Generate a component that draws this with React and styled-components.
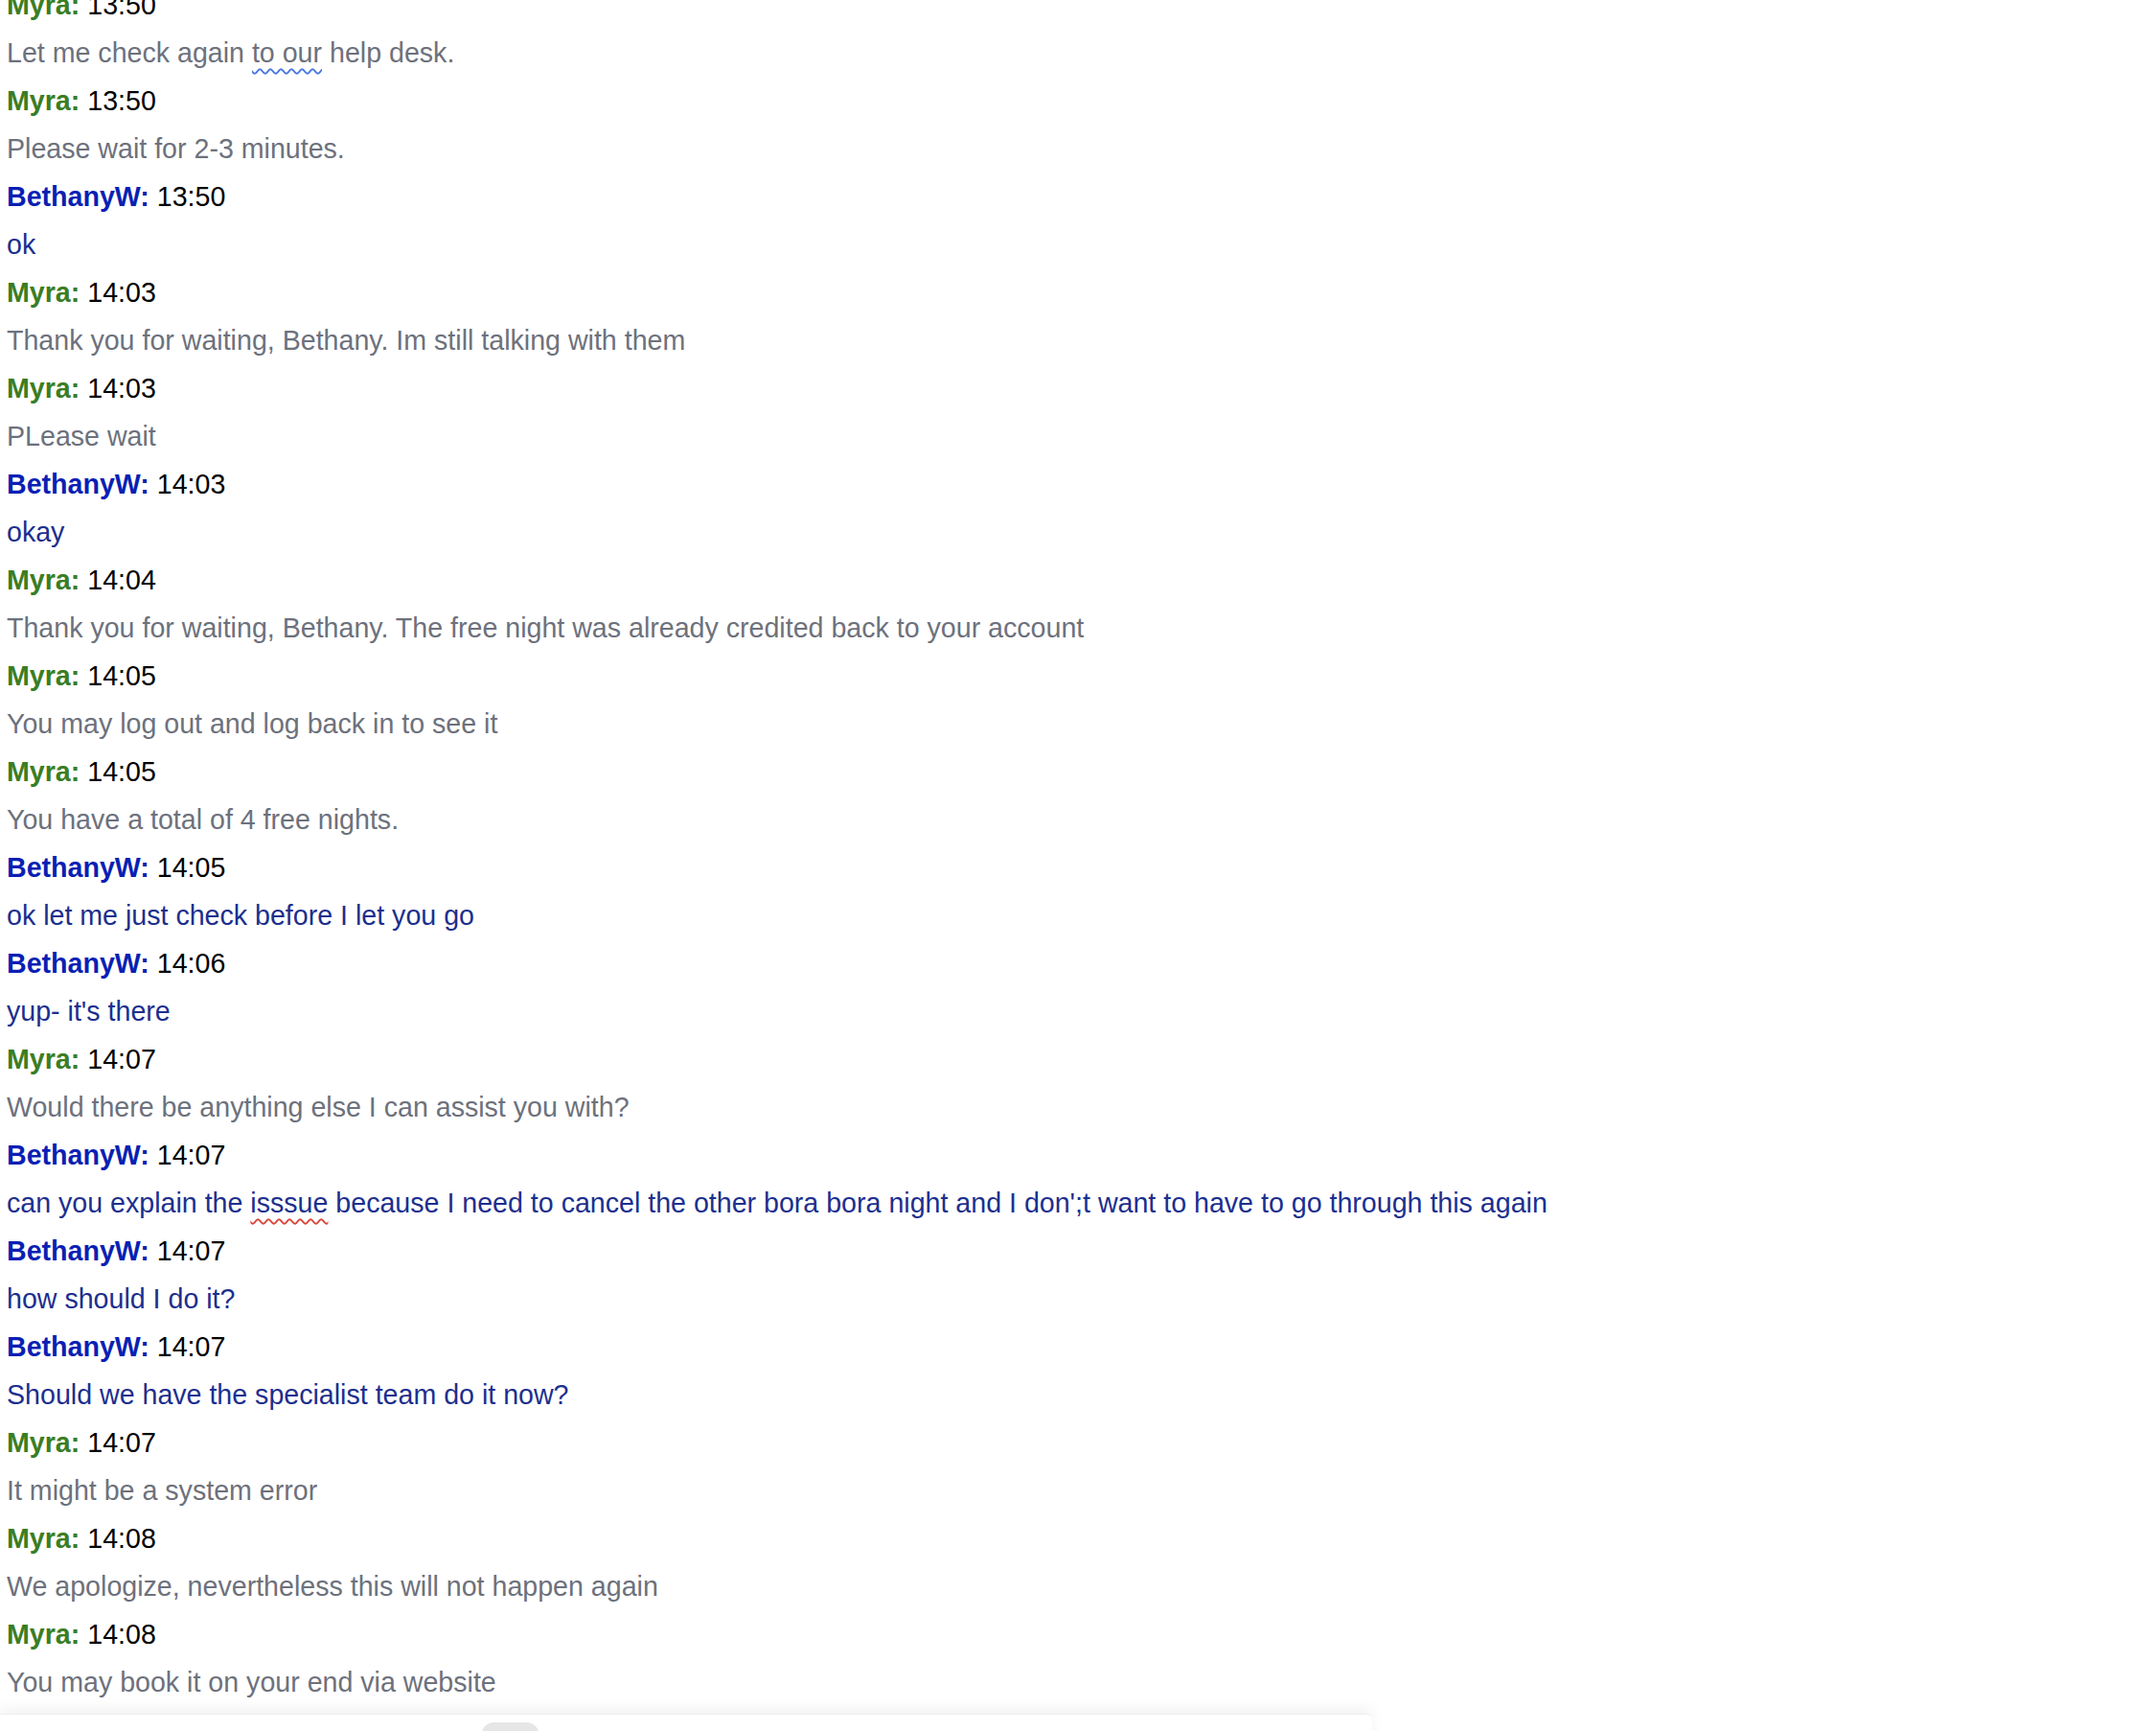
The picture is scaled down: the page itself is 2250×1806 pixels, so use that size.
import React from "react";
import styled, { createGlobalStyle } from "styled-components";

const Global = createGlobalStyle`
  html, body {
    margin: 0;
    padding: 0;
    background: #ffffff;
    overflow: hidden;
    height: 100%;
  }
  body {
    font-family: "Liberation Sans", Arial, Helvetica, sans-serif;
  }
`;

const Page = styled.div`
  width: 2250px;
  height: 1806px;
  overflow: hidden;
  display: flex;
  flex-direction: column;
  background: #fff;
`;

const Log = styled.div`
  margin-top: -20px;
  padding-left: 7px;
  display: flex;
  flex-direction: column;
`;

const Line = styled.div`
  font-size: 28.6px;
  line-height: 50px;
  height: 50px;
  white-space: nowrap;
`;

const Name = styled.span`
  font-weight: 700;
  color: ${(p) => (p.$agent ? "#3b7d23" : "#0b1fb4")};
`;

const Time = styled.span`
  color: #000;
`;

const Message = styled(Line)`
  color: ${(p) => (p.$agent ? "#6d717c" : "#1c2f8e")};
`;

const Flag = styled.span`
  text-decoration: underline wavy ${(p) => (p.$kind === "spell" ? "#d9473b" : "#4a78e0")};
  text-decoration-thickness: 1.5px;
  text-underline-offset: 6px;
`;

const Composer = styled.div`
  margin-top: 8px;
  width: 1432px;
  height: 40px;
  flex-shrink: 0;
  background: #fff;
  border-radius: 0 6px 0 0;
  box-shadow: 0 -6px 14px rgba(0, 0, 0, 0.05);
  border-top: 1px solid #f0f0f0;
  display: flex;
  padding-top: 8px;
  padding-left: 502px;
  box-sizing: border-box;
`;

const Handle = styled.div`
  width: 61px;
  height: 30px;
  background: #e6e6e6;
  border-radius: 14px;
`;

const chat = [
  ["Myra", "13:50", ["Let me check again ", { flag: "grammar", text: "to our" }, " help desk."]],
  ["Myra", "13:50", ["Please wait for 2-3 minutes."]],
  ["BethanyW", "13:50", ["ok"]],
  ["Myra", "14:03", ["Thank you for waiting, Bethany. Im still talking with them"]],
  ["Myra", "14:03", ["PLease wait"]],
  ["BethanyW", "14:03", ["okay"]],
  ["Myra", "14:04", ["Thank you for waiting, Bethany. The free night was already credited back to your account"]],
  ["Myra", "14:05", ["You may log out and log back in to see it"]],
  ["Myra", "14:05", ["You have a total of 4 free nights."]],
  ["BethanyW", "14:05", ["ok let me just check before I let you go"]],
  ["BethanyW", "14:06", ["yup- it's there"]],
  ["Myra", "14:07", ["Would there be anything else I can assist you with?"]],
  [
    "BethanyW",
    "14:07",
    [
      "can you explain the ",
      { flag: "spell", text: "isssue" },
      " because I need to cancel the other bora bora night and I don';t want to have to go through this again",
    ],
  ],
  ["BethanyW", "14:07", ["how should I do it?"]],
  ["BethanyW", "14:07", ["Should we have the specialist team do it now?"]],
  ["Myra", "14:07", ["It might be a system error"]],
  ["Myra", "14:08", ["We apologize, nevertheless this will not happen again"]],
  ["Myra", "14:08", ["You may book it on your end via website"]],
];

export default function App() {
  return (
    <>
      <Global />
      <Page>
        <Log>
          {chat.map(([who, time, parts], i) => {
            const agent = who === "Myra";
            return (
              <React.Fragment key={i}>
                <Line>
                  <Name $agent={agent}>{who}:</Name> <Time>{time}</Time>
                </Line>
                <Message $agent={agent}>
                  {parts.map((p, j) =>
                    typeof p === "string" ? (
                      <React.Fragment key={j}>{p}</React.Fragment>
                    ) : (
                      <Flag key={j} $kind={p.flag}>
                        {p.text}
                      </Flag>
                    )
                  )}
                </Message>
              </React.Fragment>
            );
          })}
        </Log>
        <Composer>
          <Handle />
        </Composer>
      </Page>
    </>
  );
}
